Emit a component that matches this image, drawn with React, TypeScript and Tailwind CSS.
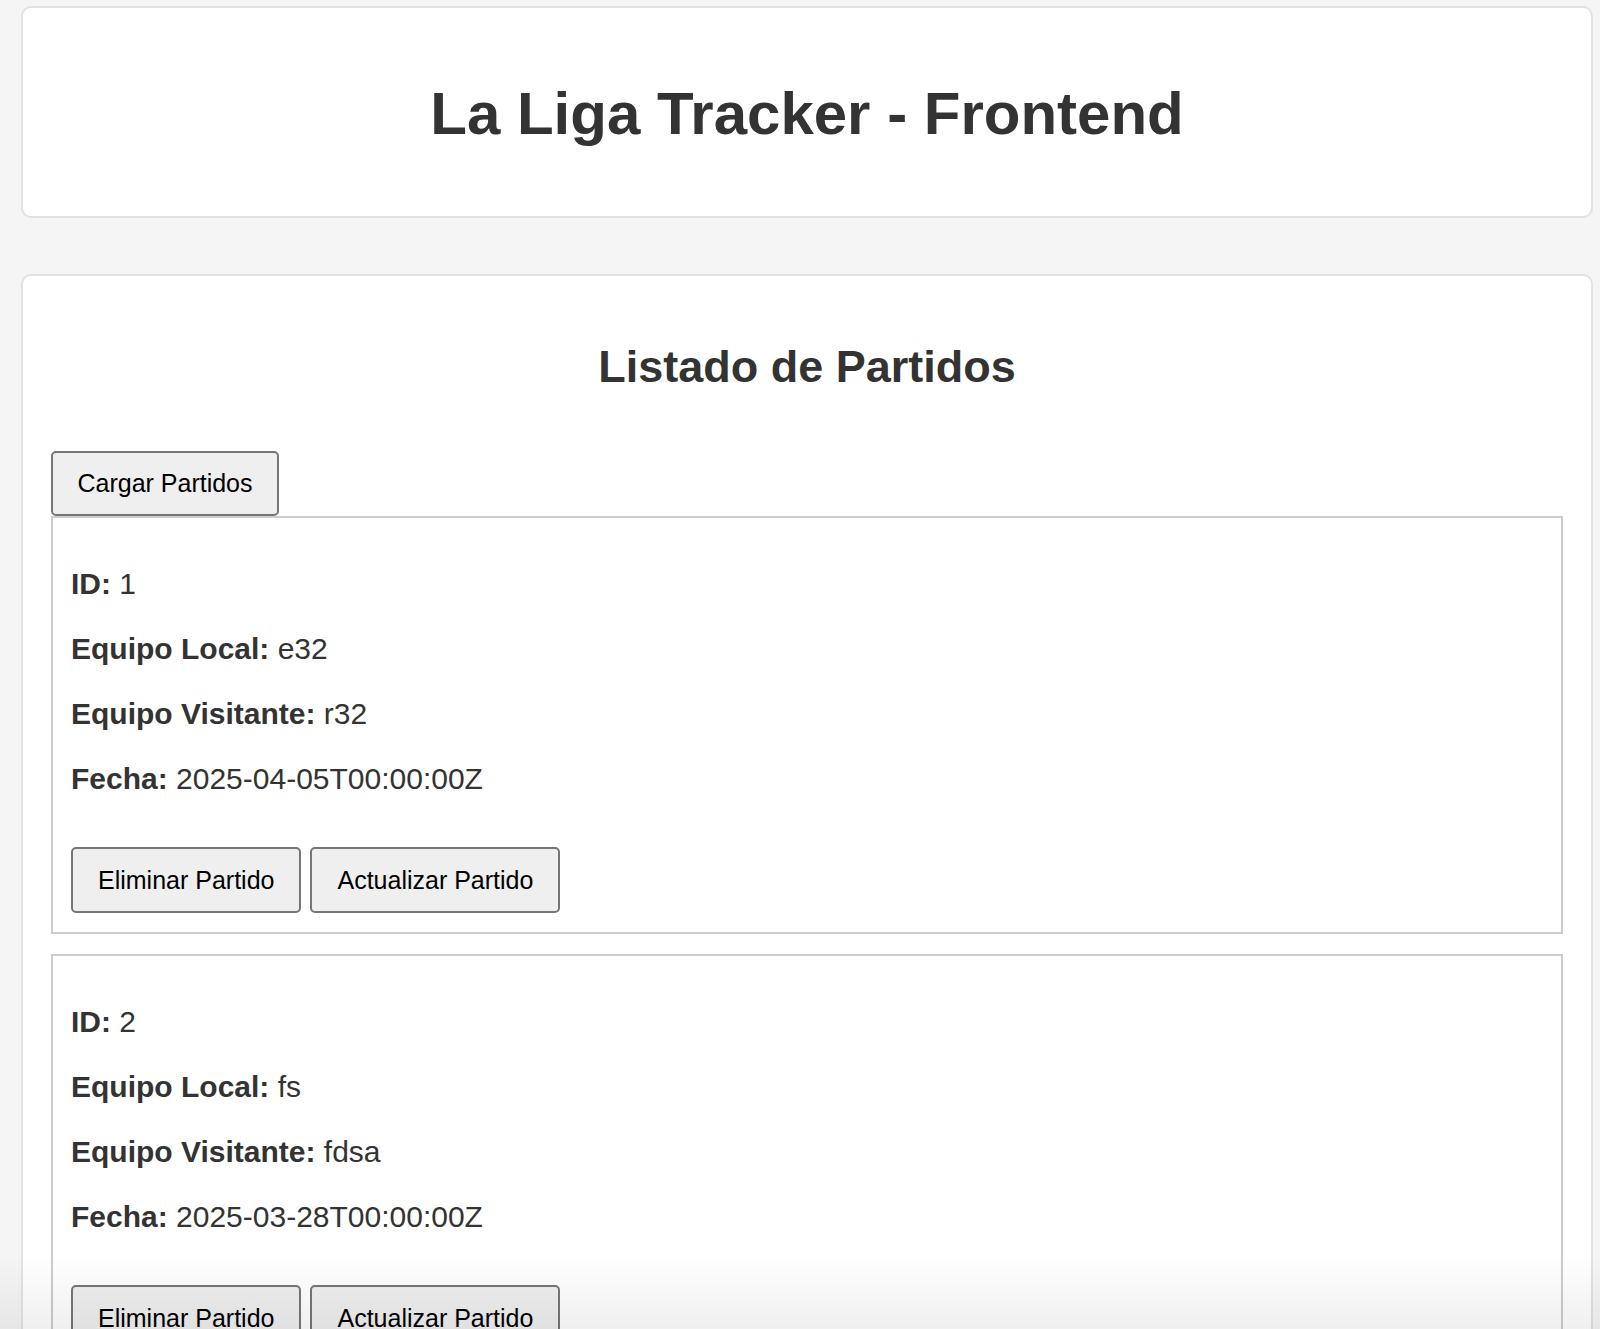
import React from "react";

type Partido = { id: number; local: string; visitante: string; fecha: string };

const partidos: Partido[] = [
  { id: 1, local: "e32", visitante: "r32", fecha: "2025-04-05T00:00:00Z" },
  { id: 2, local: "fs", visitante: "fdsa", fecha: "2025-03-28T00:00:00Z" },
];

function Field({ label, value }: { label: string; value: string | number }) {
  return (
    <p className="my-[30px] text-[30px] leading-[35px] text-[#333]">
      <strong className="font-bold">{label}:</strong> {value}
    </p>
  );
}

function ActionButton({ children }: { children: React.ReactNode }) {
  return (
    <button className="h-[66px] rounded-[5px] border-2 border-[#767676] bg-[#efefef] px-[25px] text-[25px] leading-[29px] text-black">
      {children}
    </button>
  );
}

export default function App() {
  return (
    <div className="relative h-[1329px] overflow-hidden bg-[#f5f5f5] pl-[21px] pr-[7px] pt-[6px] font-['Liberation_Sans',Arial,sans-serif] text-[#333]">
      <header className="rounded-[10px] border-2 border-[#e2e2e2] bg-white pb-[68px] pt-[71px]">
        <h1 className="text-center text-[60px] font-bold leading-[69px] text-[#333]">
          La Liga Tracker - Frontend
        </h1>
      </header>

      <main className="mt-[56px] rounded-[10px] border-2 border-[#e2e2e2] bg-white px-[28px] pt-[65px]">
        <h2 className="text-center text-[45px] font-bold leading-[52px] text-[#333]">
          Listado de Partidos
        </h2>
        <button className="mt-[58px] block h-[65px] w-[228px] rounded-[5px] border-2 border-[#767676] bg-[#efefef] text-[25px] leading-[29px] text-black">
          Cargar Partidos
        </button>
        <div className="flex flex-col gap-[20px]">
          {partidos.map((p) => (
            <div
              key={p.id}
              className="flow-root border-2 border-[#cccccc] bg-white px-[18px] pb-[19px] pt-[18px]"
            >
              <Field label="ID" value={p.id} />
              <Field label="Equipo Local" value={p.local} />
              <Field label="Equipo Visitante" value={p.visitante} />
              <Field label="Fecha" value={p.fecha} />
              <div className="mt-[51px] flex gap-[9px]">
                <ActionButton>Eliminar Partido</ActionButton>
                <ActionButton>Actualizar Partido</ActionButton>
              </div>
            </div>
          ))}
        </div>
      </main>

      <div className="pointer-events-none absolute bottom-0 left-0 right-0 h-[75px] bg-gradient-to-b from-transparent to-black/[0.06]" />
    </div>
  );
}
